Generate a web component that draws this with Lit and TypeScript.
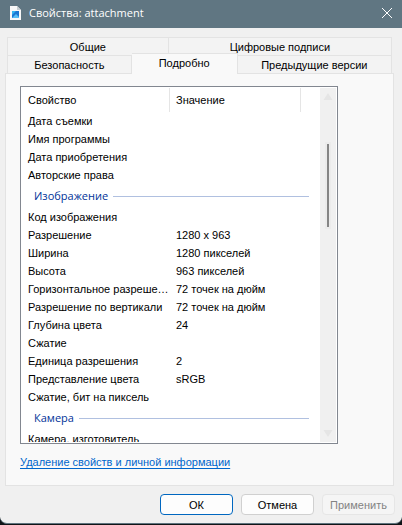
import { LitElement, html, css, svg } from "lit";
import { customElement, state } from "lit/decorators.js";
import { classMap } from "lit/directives/class-map.js";

interface Group {
  title?: string;
  rows: [string, string][];
}

const GROUPS: Group[] = [
  {
    rows: [
      ["Дата съемки", ""],
      ["Имя программы", ""],
      ["Дата приобретения", ""],
      ["Авторские права", ""],
    ],
  },
  {
    title: "Изображение",
    rows: [
      ["Код изображения", ""],
      ["Разрешение", "1280 x 963"],
      ["Ширина", "1280 пикселей"],
      ["Высота", "963 пикселей"],
      ["Горизонтальное разрешение", "72 точек на дюйм"],
      ["Разрешение по вертикали", "72 точек на дюйм"],
      ["Глубина цвета", "24"],
      ["Сжатие", ""],
      ["Единица разрешения", "2"],
      ["Представление цвета", "sRGB"],
      ["Сжатие, бит на пиксель", ""],
    ],
  },
  { title: "Камера", rows: [["Камера, изготовитель", ""]] },
];

const TAB_ROWS = [
  [
    { name: "Общие", size: "wide" },
    { name: "Цифровые подписи", size: "widest" },
  ],
  [
    { name: "Безопасность", size: "medium" },
    { name: "Подробно", size: "narrow" },
    { name: "Предыдущие версии", size: "large" },
  ],
];

@customElement("property-list")
class PropertyList extends LitElement {
  static styles = css`
    :host {
      display: flex;
      box-sizing: border-box;
      border: 1px solid #828790;
      background: #fff;
      padding: 1px;
      overflow: hidden;
    }
    .view {
      flex: 1;
      min-width: 0;
      overflow: hidden;
    }
    table {
      width: 100%;
      table-layout: fixed;
      border-collapse: collapse;
    }
    .name-col {
      width: 148px;
    }
    .value-col {
      width: 131px;
    }
    th,
    td {
      height: 18px;
      padding: 0 0 0 6px;
      font-weight: normal;
      text-align: left;
      line-height: 18px;
      white-space: nowrap;
      overflow: hidden;
      text-overflow: ellipsis;
    }
    thead th {
      height: 24px;
      box-shadow: inset -1px 0 #e5e5e5;
    }
    thead .rest {
      box-shadow: none;
    }
    .group {
      height: 24px;
      padding: 0 11px 0 12px;
    }
    .group-line {
      display: flex;
      align-items: center;
      gap: 5px;
      color: #003399;
      font: 11px/24px "Open Sans", "Noto Sans", sans-serif;
    }
    .group-line::after {
      content: "";
      flex: 1;
      height: 1px;
      background: #b0c0e0;
    }
    .scroll {
      display: flex;
      flex-direction: column;
      align-items: center;
      width: 16px;
      background: #f0f0f0;
    }
    .arrow {
      flex: none;
      width: 16px;
      height: 17px;
      fill: #e5e5e5;
    }
    .track {
      flex: 1;
      display: flex;
      flex-direction: column;
      align-items: center;
    }
    .before {
      flex: 39;
    }
    .thumb {
      flex: 83;
      width: 2px;
      background: #858585;
      box-shadow: 0 0 0 2px #ebebeb;
    }
    .after {
      flex: 198;
    }
  `;

  render() {
    return html`
      <div class="view">
        <table>
          <colgroup>
            <col class="name-col" />
            <col class="value-col" />
            <col />
          </colgroup>
          <thead>
            <tr>
              <th scope="col">Свойство</th>
              <th scope="col">Значение</th>
              <th class="rest"></th>
            </tr>
          </thead>
          ${GROUPS.map(
            (group) => html`<tbody>
              ${group.title
                ? html`<tr>
                    <th class="group" colspan="3" scope="rowgroup">
                      <div class="group-line">${group.title}</div>
                    </th>
                  </tr>`
                : ""}
              ${group.rows.map(
                ([name, value]) => html`<tr>
                  <th scope="row">${name}</th>
                  <td colspan="2">${value}</td>
                </tr>`
              )}
            </tbody>`
          )}
        </table>
      </div>
      <div class="scroll" aria-hidden="true">
        <svg class="arrow" viewBox="0 0 16 17"><path d="M8 5 12.500 12h-9z" /></svg>
        <div class="track">
          <div class="before"></div>
          <div class="thumb"></div>
          <div class="after"></div>
        </div>
        <svg class="arrow" viewBox="0 0 16 17"><path d="M8 12 3.500 5h9z" /></svg>
      </div>
    `;
  }
}

@customElement("app-root")
class AppRoot extends LitElement {
  static styles = css`
    :host {
      display: flex;
      flex-direction: column;
      box-sizing: border-box;
      height: 100vh;
      background: #101417;
      color: #000;
      font: 11px/16px "Liberation Sans", Arial, sans-serif;
    }
    .window {
      flex: 1;
      min-height: 0;
      display: flex;
      flex-direction: column;
      background: #f0f0f0;
      border-bottom: 1px solid #5f737e;
      border-radius: 0 0 7px 7px;
      margin-bottom: 1px;
    }
    .title-bar {
      display: flex;
      align-items: center;
      box-sizing: border-box;
      height: 28px;
      padding: 0 9px 3px 8px;
      background: #607682;
      color: #fff;
    }
    .file {
      width: 14px;
      height: 16px;
      margin-right: 7px;
    }
    h1 {
      flex: 1;
      margin: 0;
      font: 11px/24px "Open Sans", "Noto Sans", sans-serif;
    }
    button {
      font: inherit;
      color: inherit;
      padding: 0;
    }
    .close {
      display: flex;
      border: 0;
      background: none;
    }
    .close svg {
      width: 12px;
      height: 12px;
      stroke: #fff;
      fill: none;
    }
    .tabs {
      padding: 9px 10px 0 7px;
    }
    .tab-row {
      display: flex;
      height: 18px;
    }
    .tab {
      border: 1px solid #e3e3e3;
      border-width: 1px 1px 0 0;
      background: #f3f3f3;
      flex: 1 1 0;
    }
    .tab:first-child {
      border-left-width: 1px;
    }
    .tab.wide {
      flex-grow: 161;
    }
    .tab.widest {
      flex-grow: 224;
    }
    .tab.medium {
      flex-grow: 124;
    }
    .tab.narrow {
      flex-grow: 106;
    }
    .tab.large {
      flex-grow: 155;
    }
    .tab.selected {
      position: relative;
      height: 21px;
      margin-top: -2px;
      padding-bottom: 3px;
      background: #f9f9f9;
    }
    .panel {
      flex: 1;
      min-height: 0;
      display: flex;
      flex-direction: column;
      margin: 0 8px 0 5px;
      padding: 12px 55px 15px 14px;
      border: 1px solid #e3e3e3;
      background: #f9f9f9;
    }
    property-list {
      flex: 1;
      min-height: 0;
      margin-bottom: 10px;
    }
    a {
      align-self: flex-start;
      color: #0066cc;
      text-underline-offset: 2px;
    }
    .actions {
      display: flex;
      justify-content: flex-end;
      gap: 8px;
      padding: 8px 7px 8px 0;
    }
    .action {
      width: 73px;
      height: 21px;
      border: 1px solid #d0d0d0;
      border-radius: 4px;
      background: #fdfdfd;
    }
    .action.primary {
      border-color: #0067c0;
    }
    .action:disabled {
      border-color: #e6e6e6;
      background: #f5f5f5;
      color: #838383;
    }
  `;

  @state() private selected = "Подробно";

  render() {
    return html`
      <main class="window">
        <header class="title-bar">
          ${svg`<svg class="file" viewBox="0 0 14 16" aria-hidden="true">
            <path d="M2 1h7l4 4v10H2z" fill="#f7f7f7" />
            <path d="M9 1v4h4z" fill="#c5ccd0" />
            <path d="M4 6h7v7H4z" fill="#1976d2" />
            <path d="M4 6h4L4 10z" fill="#35b5f2" />
            <path d="M4 13l4-4 3 3v1z" fill="#55bdf5" />
          </svg>`}
          <h1>Свойства: attachment</h1>
          <button class="close" aria-label="Закрыть">
            <svg viewBox="0 0 12 12"><path d="M1 1l10 10M11 1 1 11" /></svg>
          </button>
        </header>
        <div class="tabs" role="tablist">
          ${TAB_ROWS.map(
            (row) => html`<div class="tab-row" role="presentation">
              ${row.map(
                (tab) => html`<button
                  role="tab"
                  aria-selected=${this.selected === tab.name}
                  class=${classMap({
                    tab: true,
                    [tab.size]: true,
                    selected: this.selected === tab.name,
                  })}
                  @click=${() => (this.selected = tab.name)}
                >
                  ${tab.name}
                </button>`
              )}
            </div>`
          )}
        </div>
        <section class="panel" role="tabpanel">
          <property-list></property-list>
          <a href="#remove">Удаление свойств и личной информации</a>
        </section>
        <footer class="actions">
          <button class="action primary">ОК</button>
          <button class="action">Отмена</button>
          <button class="action" disabled>Применить</button>
        </footer>
      </main>
    `;
  }
}
